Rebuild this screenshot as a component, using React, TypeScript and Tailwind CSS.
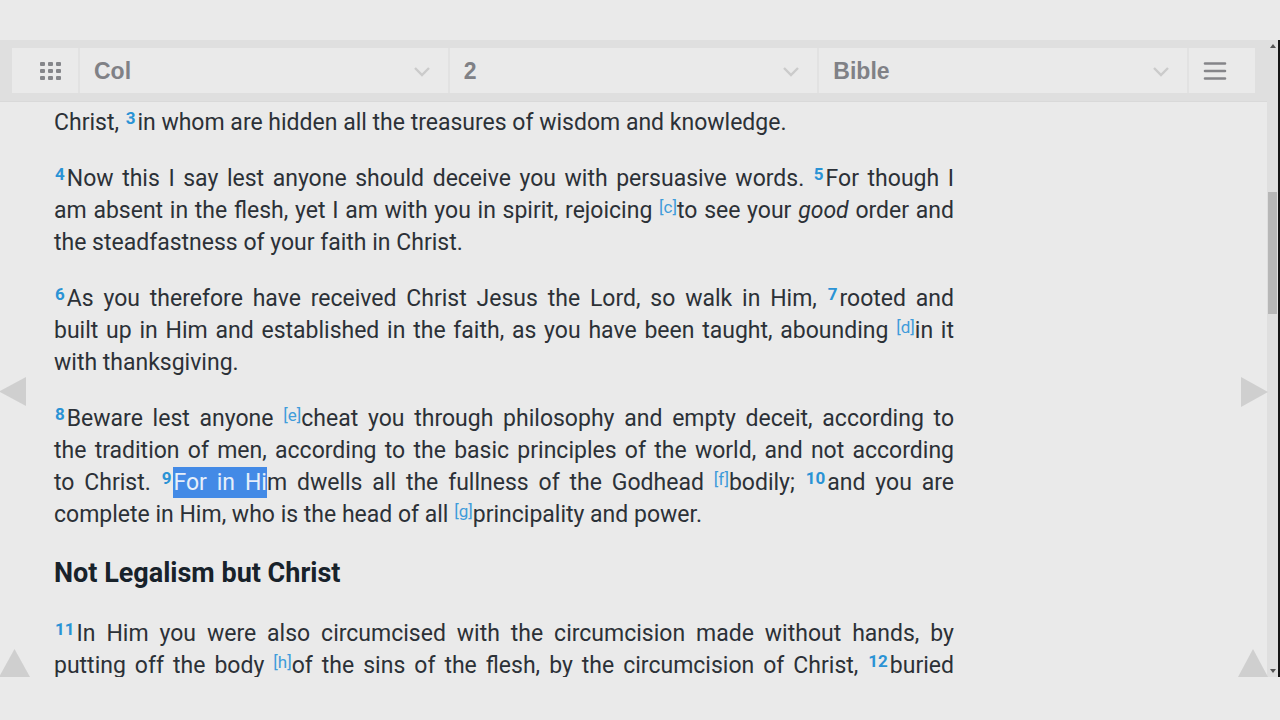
import type { ReactNode } from "react";

type PickerProps = {
  label: string;
  value: string;
  options: string[];
};

function Picker({ label, value, options }: PickerProps) {
  return (
    <div className="relative flex-1 bg-[#eaeaea]">
      <select
        aria-label={label}
        defaultValue={value}
        className="h-full w-full appearance-none bg-transparent pl-3.5 pr-12 pt-0.5 font-['Liberation_Sans',sans-serif] text-[23px] font-bold text-[#808186] outline-none"
      >
        {options.map((option) => (
          <option key={option}>{option}</option>
        ))}
      </select>
      <svg
        className="pointer-events-none absolute right-4 top-1/2 h-4 w-5 -translate-y-1/2"
        viewBox="0 0 20 16"
        fill="none"
        stroke="#cbcbcb"
        strokeWidth="2.4"
      >
        <path d="M3 5l7 7 7-7" />
      </svg>
    </div>
  );
}

function Verse({ n }: { n: number }) {
  return (
    <a href={`#v${n}`} className="relative -top-1.5 ml-px mr-0.5 text-[17px] leading-none font-bold text-[#2a93d5]">
      {n}
    </a>
  );
}

function Note({ id }: { id: string }) {
  return (
    <a href={`#fn-${id}`} className="relative -top-[5px] text-[17px] leading-none text-[#3f9cda]">
      [{id}]
    </a>
  );
}

function Para({ children }: { children: ReactNode }) {
  return <p className="mb-6 text-justify">{children}</p>;
}

function Toolbar() {
  return (
    <header className="border-b border-[#d9d9d9] bg-[#dfdfdf] px-3 py-2">
      <div className="flex h-[45px] gap-0.5 bg-[#e2e2e2]">
        <button type="button" aria-label="Books" className="flex w-[66px] items-center justify-center bg-[#eaeaea] pl-3">
          <svg className="h-6 w-6" viewBox="0 0 24 24" fill="#85868a">
            {[3, 10, 17].map((y) =>
              [1, 9, 17].map((x) => <rect key={`${x}-${y}`} x={x} y={y} width="5" height="4" rx="1" />)
            )}
          </svg>
        </button>
        <Picker label="Book" value="Col" options={["Phil", "Col", "1 Thess"]} />
        <Picker label="Chapter" value="2" options={["1", "2", "3", "4"]} />
        <Picker label="Section" value="Bible" options={["Bible", "Commentary"]} />
        <button type="button" aria-label="Menu" className="flex w-[66px] items-center bg-[#eaeaea] pl-3.5">
          <svg className="h-6 w-6" viewBox="0 0 24 24" stroke="#858589" strokeWidth="2.6" strokeLinecap="round">
            <path d="M2 4.500h20M2 12h20M2 19.500h20" />
          </svg>
        </button>
      </div>
    </header>
  );
}

function Scrollbar() {
  return (
    <div className="flex w-[13px] shrink-0 border-r-2 border-[#141414] bg-[#dfdfdf]">
      <div className="flex w-full flex-col items-center">
        <svg className="mt-1 h-1 w-1.5" viewBox="0 0 6 4" fill="#555">
          <path d="M0 4L3 0l3 4z" />
        </svg>
        <div className="basis-36 shrink-0" />
        <div className="h-[122px] w-[9px] bg-[#b7b7b7]" />
        <svg className="mb-1 mt-auto h-1 w-1.5" viewBox="0 0 6 4" fill="#555">
          <path d="M0 0l3 4 3-4z" />
        </svg>
      </div>
    </div>
  );
}

export default function App() {
  return (
    <div className="flex h-screen flex-col bg-[#eaeaea] pb-[43px] pt-10">
      <div className="relative flex min-h-0 flex-1 overflow-hidden">
        <div className="flex min-w-0 flex-1 flex-col">
          <Toolbar />
          <main className="min-h-0 max-w-[954px] flex-1 overflow-hidden pl-[54px] pt-[5px] font-[Roboto,sans-serif] text-[23px] leading-8 text-[#2c3137]">
            <Para>
              Christ, <Verse n={3} />in whom are hidden all the treasures of wisdom and knowledge.
            </Para>
            <Para>
              <Verse n={4} />Now this I say lest anyone should deceive you with persuasive words. <Verse n={5} />For
              though I am&nbsp;absent in the flesh, yet I am with you in spirit, rejoicing <Note id="c" />to see your{" "}
              <i>good</i> order and the&nbsp;steadfastness of your faith in Christ.
            </Para>
            <Para>
              <Verse n={6} />As you therefore have received Christ Jesus the Lord, so walk in Him, <Verse n={7} />rooted
              and built&nbsp;up in Him and established in the faith, as you have been taught,
              abounding <Note id="d" />in it with&nbsp;thanksgiving.
            </Para>
            <Para>
              <Verse n={8} />Beware lest anyone <Note id="e" />cheat you through philosophy and empty deceit, according
              to the&nbsp;tradition of men, according to the basic principles of the world, and not according
              to&nbsp;Christ. <Verse n={9} />
              <mark className="bg-[#438ae6] py-0.5 text-[#e6effa]">For in Hi</mark>m dwells all the fullness of the
              Godhead <Note id="f" />bodily; <Verse n={10} />and you are complete in Him, who is the head of
              all <Note id="g" />principality and power.
            </Para>
            <h2 className="mb-[29px] mt-[26px] text-[27px] font-bold text-[#18222a]">Not Legalism but Christ</h2>
            <Para>
              <Verse n={11} />In Him you were also circumcised with the circumcision made without hands, by putting off
              the body <Note id="h" />of the sins of the flesh, by the circumcision of Christ, <Verse n={12} />buried
              with&nbsp;Him in baptism.
            </Para>
          </main>
        </div>
        <Scrollbar />

        <button type="button" aria-label="Previous chapter" className="absolute left-0 top-[336px]">
          <svg className="h-8 w-7" viewBox="0 0 28 32" fill="#cfcfcf">
            <path d="M26 1v29L-1 15.500z" />
          </svg>
        </button>
        <button type="button" aria-label="Next chapter" className="absolute right-3 top-[336px]">
          <svg className="h-8 w-7" viewBox="0 0 28 32" fill="#cfcfcf">
            <path d="M1 1v30l27-15z" />
          </svg>
        </button>
        <button type="button" aria-label="Scroll to top" className="absolute bottom-0 left-0">
          <svg className="h-7 w-[30px]" viewBox="0 0 30 28" fill="#cfcfcf">
            <path d="M14.500 0L30 28H-1z" />
          </svg>
        </button>
        <button type="button" aria-label="Back to top" className="absolute bottom-0 right-3">
          <svg className="h-7 w-[30px]" viewBox="0 0 30 28" fill="#cfcfcf">
            <path d="M15 0l15 28H0z" />
          </svg>
        </button>
      </div>
    </div>
  );
}
